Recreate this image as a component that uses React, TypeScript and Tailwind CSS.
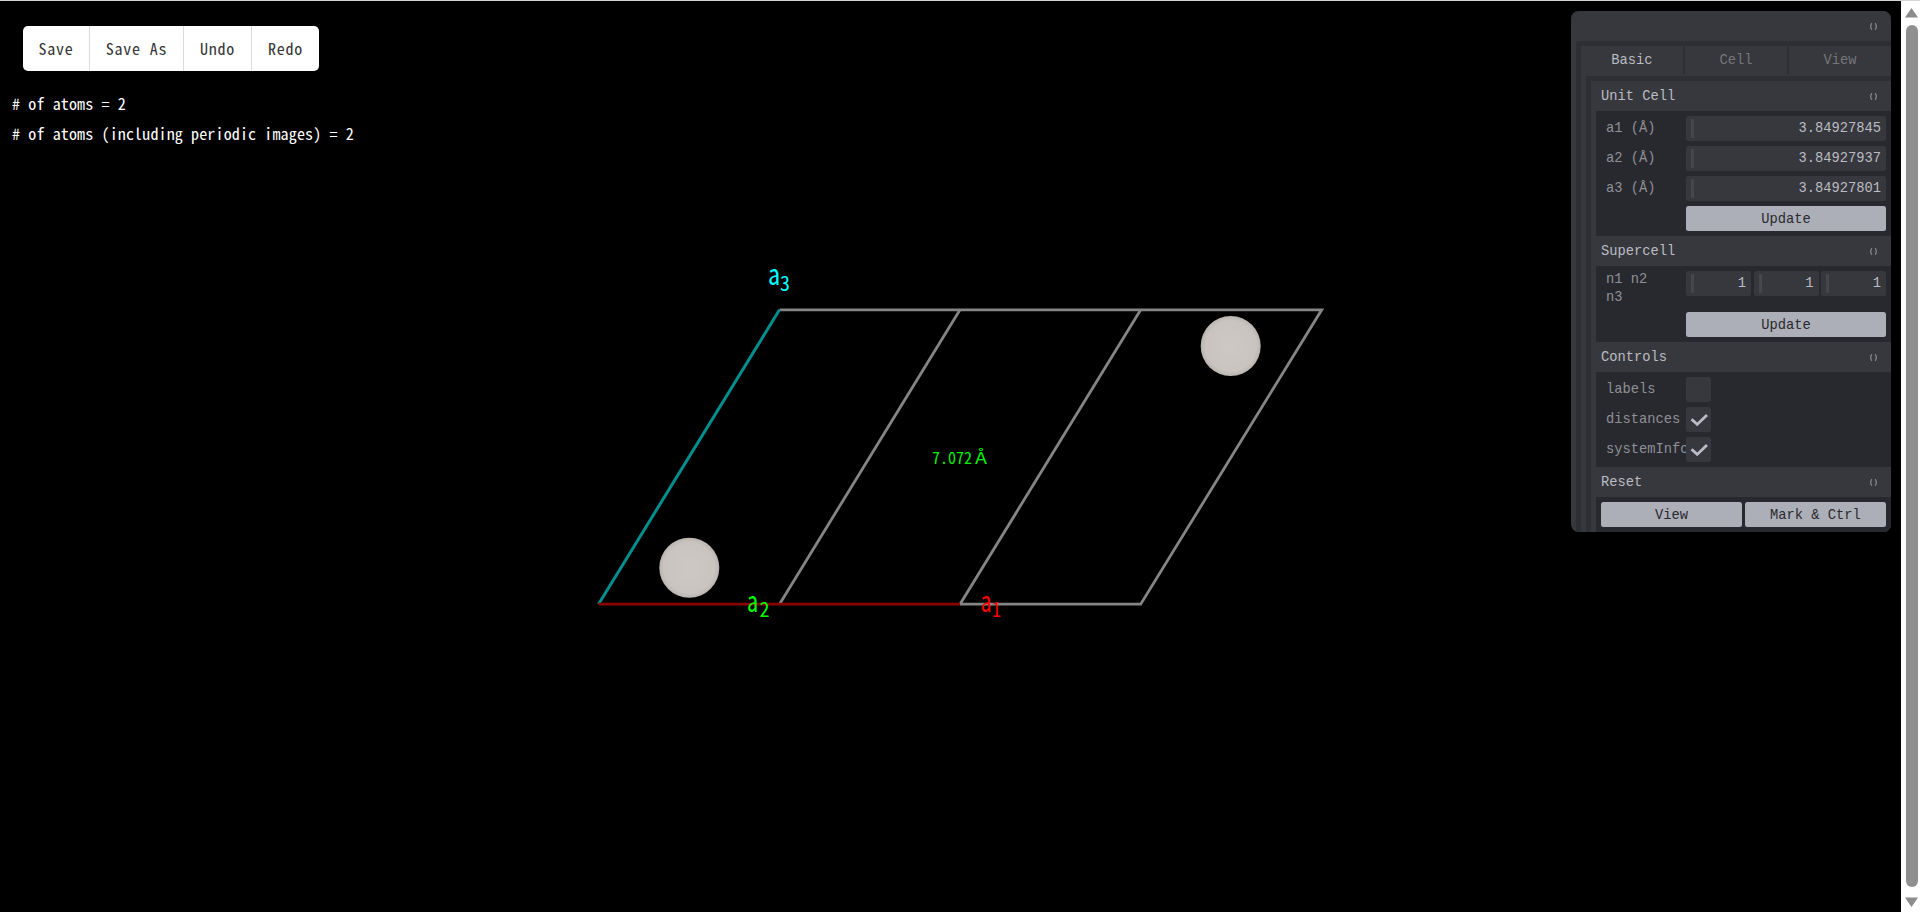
const mono = "font-['Liberation_Mono',monospace]";
const narrow = "font-['Noto_Sans_Mono_CJK_JP','Noto_Sans_CJK_JP',monospace]";

function FoldMark() {
  return (
    <svg width="7" height="7" viewBox="0 0 7 7" fill="none" stroke="#8a8b91" strokeWidth="1.2">
      <path d="M1.8 0.2C0.6 2 0.6 5 1.8 6.8" />
      <path d="M5.2 0.2C6.4 2 6.4 5 5.2 6.8" />
    </svg>
  );
}

function Folder({ title, children }: { title: string; children: React.ReactNode }) {
  return (
    <div>
      <div className="flex h-[30px] items-center justify-between pl-[10px] pr-[14px] text-[#bbbcc4]">
        <span className="pt-[2px]">{title}</span>
        <FoldMark />
      </div>
      <div className="ml-[5px] flex flex-col gap-[5px] bg-[#28292e] py-[5px]">{children}</div>
    </div>
  );
}

function Row({ label, children }: { label: string; children: React.ReactNode }) {
  return (
    <div className="flex items-start pl-[10px] pr-[5px]">
      <div className="flex min-h-[25px] w-[80px] items-center overflow-hidden whitespace-pre-wrap leading-[18px] text-[#8f9097]">
        {label}
      </div>
      <div className="w-[200px]">{children}</div>
    </div>
  );
}

function NumberBox({ value }: { value: string }) {
  return (
    <div className="relative flex h-[25px] items-center justify-end rounded-[2.5px] bg-[#37383d] pr-[5px] pt-[2px] text-[#bbbcc4]">
      <div className="absolute left-[5px] top-[3px] h-[19px] w-[3px] rounded-[1px] bg-[#46474c]" />
      {value}
    </div>
  );
}

function ActionButton({ label }: { label: string }) {
  return (
    <div className="flex h-[25px] items-center justify-center rounded-[2.5px] bg-[#adafb8] pt-[3px] text-[#28292e]">{label}</div>
  );
}

function CheckBox({ checked }: { checked?: boolean }) {
  return (
    <div className="h-[25px] w-[25px] rounded-[2.5px] bg-[#37383d]">
      {checked && (
        <svg width="25" height="25" viewBox="0 0 25 25" fill="none" stroke="#bbbcc4" strokeWidth="2.8">
          <path d="M5.5 12.3L11.2 17.4L21 8" />
        </svg>
      )}
    </div>
  );
}

function ControlPanel() {
  return (
    <div className={`absolute right-[10px] top-[10px] w-[320px] overflow-hidden rounded-[7.5px] bg-[#37383d] text-[13.75px] ${mono}`}>
      <div className="flex h-[30px] items-center justify-end pr-[14px]">
        <FoldMark />
      </div>
      <div className="pl-[5px]">
        <div className="bg-[#2e2f34] pl-[5px] pt-[5px]">
          <div className="grid h-[28px] grid-cols-3 gap-[2px]">
            <div className="flex items-center justify-center bg-[#37383d] pt-[3px] text-[#bbbcc4]">Basic</div>
            <div className="flex items-center justify-center bg-[#37383d] pt-[3px] text-[#75767c]">Cell</div>
            <div className="flex items-center justify-center bg-[#37383d] pt-[3px] text-[#75767c]">View</div>
          </div>
          <div className="bg-[#37383d] pl-[5px] pt-[2px]">
            <div className="bg-[#2e2f34] pl-[5px] pt-[5px]">
              <div className="bg-[#37383d]">
                <Folder title="Unit Cell">
                  <Row label="a1 (Å)"><NumberBox value="3.84927845" /></Row>
                  <Row label="a2 (Å)"><NumberBox value="3.84927937" /></Row>
                  <Row label="a3 (Å)"><NumberBox value="3.84927801" /></Row>
                  <Row label=""><ActionButton label="Update" /></Row>
                </Folder>
                <Folder title="Supercell">
                  <Row label={"n1 n2\nn3"}>
                    <div className="grid grid-cols-3 gap-[2.5px]">
                      <NumberBox value="1" />
                      <NumberBox value="1" />
                      <NumberBox value="1" />
                    </div>
                  </Row>
                  <Row label=""><ActionButton label="Update" /></Row>
                </Folder>
                <Folder title="Controls">
                  <Row label="labels"><CheckBox /></Row>
                  <Row label="distances"><CheckBox checked /></Row>
                  <Row label="systemInfo"><CheckBox checked /></Row>
                </Folder>
                <Folder title="Reset">
                  <div className="grid grid-cols-2 gap-[3px] pl-[5px] pr-[5px]">
                    <ActionButton label="View" />
                    <ActionButton label="Mark & Ctrl" />
                  </div>
                </Folder>
              </div>
            </div>
          </div>
        </div>
      </div>
    </div>
  );
}

function Toolbar() {
  const buttons = [
    { label: "Save", width: "w-[67px]" },
    { label: "Save As", width: "w-[94px]" },
    { label: "Undo", width: "w-[68px]" },
    { label: "Redo", width: "w-[67px]" },
  ];
  return (
    <div className="ml-[23px] flex h-[45px] w-[296px] overflow-hidden rounded-[5px] bg-white text-[16px] tracking-[0.8px] text-[#363636]">
      {buttons.map((b, i) => (
        <div
          key={b.label}
          className={`flex items-center justify-center pb-[2px] ${b.width} ${i < 3 ? "border-r border-[#dbdbdb]" : ""}`}
        >
          {b.label}
        </div>
      ))}
    </div>
  );
}

// crystal cell, coordinates are page pixels
function Scene() {
  const font = "'Noto Sans Mono CJK JP', 'Noto Sans CJK JP', monospace";
  return (
    <svg className="absolute left-0 top-0" width="1901" height="911" viewBox="0 1 1901 911" fill="none">
      <defs>
        <radialGradient id="atom">
          <stop offset="0%" stopColor="#cdc8c3" />
          <stop offset="85%" stopColor="#c9c4bf" />
          <stop offset="100%" stopColor="#b9b4af" />
        </radialGradient>
      </defs>
      <g stroke="#858585" strokeWidth="2.8">
        <path d="M779.5 309.8H1321.7L1140.7 604.2H960" />
        <path d="M779.5 604.2L960 309.8" />
        <path d="M960 604.2L1140.7 309.8" />
      </g>
      <path d="M598.5 604.2L779.5 309.8" stroke="#008f8f" strokeWidth="3" />
      <path d="M598.5 604.2H960" stroke="#8b0000" strokeWidth="2.8" />
      <circle cx="689.3" cy="567.7" r="30" fill="url(#atom)" />
      <circle cx="1230.7" cy="346" r="30" fill="url(#atom)" />
      <g fontFamily={font}>
        <text x="768" y="285" fontSize="30" fill="#00ffff" textLength="12" lengthAdjust="spacingAndGlyphs">a</text>
        <text x="780" y="291" fontSize="21" fill="#00ffff" textLength="10" lengthAdjust="spacingAndGlyphs">3</text>
        <text x="747" y="612" fontSize="30" fill="#00ff00" textLength="11" lengthAdjust="spacingAndGlyphs">a</text>
        <text x="759.5" y="617" fontSize="21" fill="#00ff00" textLength="10" lengthAdjust="spacingAndGlyphs">2</text>
        <text x="980.5" y="612" fontSize="30" fill="#ff0000" textLength="11" lengthAdjust="spacingAndGlyphs">a</text>
        <text x="992" y="617" fontSize="21" fill="#ff0000" textLength="9" lengthAdjust="spacingAndGlyphs">1</text>
        <text x="932" y="464" fontSize="16" fill="#00f000">7.072</text>
        <text x="975" y="464" fontSize="16" fill="#00f000" textLength="12" lengthAdjust="spacingAndGlyphs">Å</text>
      </g>
    </svg>
  );
}

function Scrollbar() {
  return (
    <div className="flex h-full w-[19px] shrink-0 flex-col items-center bg-white pl-[2px]">
      <svg className="mt-[6px] shrink-0" width="13" height="11" viewBox="0 0 13 11" fill="#8c8c8c">
        <path d="M6.5 1L13 10.5H0Z" />
      </svg>
      <div className="mt-[7px] w-[12px] flex-1 rounded-full bg-[#8f8f8f]" />
      <svg className="mb-[4px] mt-[10px] shrink-0" width="13" height="11" viewBox="0 0 13 11" fill="#8c8c8c">
        <path d="M0 0.5H13L6.5 10Z" />
      </svg>
    </div>
  );
}

export default function App() {
  return (
    <div className={`h-[912px] w-full overflow-hidden bg-white ${narrow}`}>
      <div className="h-px bg-[#d4d4d4]" />
      <div className="flex h-[911px]">
        <div className="relative flex-1 bg-black pt-[25px]">
          <Scene />
          <div className="relative">
            <Toolbar />
            <div className="ml-[12px] mt-[17px] text-[16px] leading-[30px] tracking-[0.14px] text-white">
              <div># of atoms = 2</div>
              <div># of atoms (including periodic images) = 2</div>
            </div>
          </div>
          <ControlPanel />
        </div>
        <Scrollbar />
      </div>
    </div>
  );
}
